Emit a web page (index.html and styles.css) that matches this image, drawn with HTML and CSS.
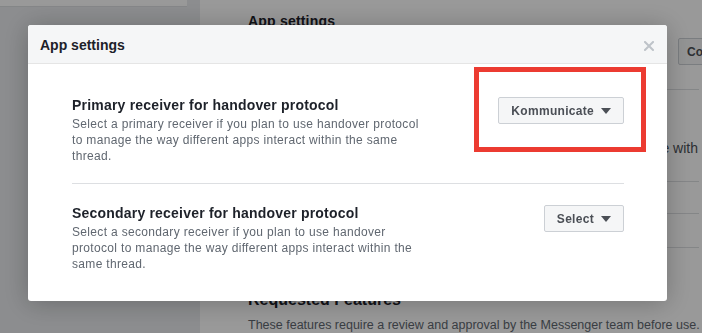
FILE: index.html
```html
<!DOCTYPE html>
<html lang="en">
<head>
  <meta charset="UTF-8">
  <title>App settings</title>
  <link rel="stylesheet" href="styles.css">
</head>
<body>

<div class="page">
  <aside class="sidebar">
    <div class="sidebar-card"></div>
  </aside>

  <main class="main">
    <h1 class="main-title">App settings</h1>
    <div class="main-actions">
      <button type="button" class="page-btn">Configure</button>
    </div>
    <div class="main-row row-a"></div>
    <div class="main-row row-note">Choose which apps your Page can share with</div>
    <div class="main-row row-b"></div>
    <div class="main-row row-c"></div>

    <h2 class="main-subtitle">Requested Features</h2>
    <p class="main-text">These features require a review and approval by the Messenger team before use.</p>
  </main>
</div>

<div class="overlay">
  <div class="modal">
    <div class="modal-header">
      <span class="modal-title">App settings</span>
      <span class="modal-close" title="Close">
        <svg width="10" height="10" viewBox="0 0 10 10">
          <path d="M1 1 L9 9 M9 1 L1 9" stroke="#bec3c9" stroke-width="2" stroke-linecap="square"/>
        </svg>
      </span>
    </div>

    <div class="modal-body">
      <div class="setting">
        <div class="setting-text">
          <div class="setting-title">Primary receiver for handover protocol</div>
          <div class="setting-desc">Select a primary receiver if you plan to use handover protocol to manage the way different apps interact within the same thread.</div>
        </div>
        <button type="button" class="select-btn">
          Kommunicate
          <svg class="caret" width="10" height="6" viewBox="0 0 10 6"><path d="M0 0 H10 L5 6 Z" fill="#4b4f56"/></svg>
        </button>
      </div>

      <div class="setting">
        <div class="setting-text">
          <div class="setting-title">Secondary receiver for handover protocol</div>
          <div class="setting-desc">Select a secondary receiver if you plan to use handover protocol to manage the way different apps interact within the same thread.</div>
        </div>
        <button type="button" class="select-btn">
          Select
          <svg class="caret" width="10" height="6" viewBox="0 0 10 6"><path d="M0 0 H10 L5 6 Z" fill="#4b4f56"/></svg>
        </button>
      </div>
    </div>
  </div>

  <!-- красная рамка-выделение поверх окна -->
  <div class="callout"></div>
</div>

</body>
</html>
```

FILE: styles.css
```css
html, body {
  margin: 0;
  height: 100%;
  overflow: hidden;
}
body {
  font-family: "Liberation Sans", Arial, sans-serif;
  color: #1d2129;
  background: #fff;
}

/* страница под затемнением */
.page {
  display: flex;
  width: 702px;
  height: 100%;
}
.sidebar {
  flex: 0 0 200px;
  background: #e9ebee;
}
.sidebar-card {
  width: 187px;
  height: 6px;
  background: #fff;
  border-bottom: 1px solid #dddfe2;
}
.main {
  flex: 0 0 auto;
  width: 451px;
  padding: 0 3px 0 48px;
  background: #fff;
}
.main-title {
  margin: 12px 0 0;
  font-size: 14px;
  line-height: 18px;
  letter-spacing: 0.2px;
}
.main-actions {
  margin-top: 8px;
  padding-left: 430px;
  white-space: nowrap;
  height: 27px;
}
.page-btn {
  height: 27px;
  padding: 0 8px;
  border: 1px solid #ccd0d5;
  border-radius: 2px;
  background: #f5f6f7;
  font: bold 12px "Liberation Sans", Arial, sans-serif;
  color: #4b4f56;
}
.main-row {
  border-bottom: 1px solid #dddfe2;
}
.row-a { height: 24px; }
.row-b { height: 31px; }
.row-c { height: 33px; }
.row-note {
  height: 41px;
  padding: 50px 1px 0 0;
  line-height: 16px;
  text-align: right;
  white-space: nowrap;
  overflow: hidden;
  font-size: 14px;
  color: #4b4f56;
}
.main-subtitle {
  margin: 42px 0 0;
  font-size: 16px;
  line-height: 20px;
}
.main-text {
  margin: 8px 0 0;
  font-size: 12.5px;
  line-height: 15px;
  color: #606770;
  white-space: nowrap;
}

/* затемнение и модальное окно */
.overlay {
  position: fixed;
  inset: 0;
  background: rgba(0, 0, 0, 0.4);
  padding: 25px 0 0 28px;
}
.modal {
  width: 639px;
  background: #fff;
  border-radius: 3px;
  overflow: hidden;
  box-shadow: 0 2px 26px rgba(0, 0, 0, 0.25);
}
.modal-header {
  display: flex;
  align-items: center;
  justify-content: space-between;
  height: 38px;
  padding: 0 13px 0 12px;
  background: #f5f6f7;
  border-bottom: 1px solid #e5e5e5;
}
.modal-title {
  margin-top: 2px;
  font-size: 14px;
  font-weight: bold;
  color: #1d2129;
}
.modal-close {
  display: flex;
  margin-top: 3px;
}
.modal-body {
  padding: 13px 43px 10px 44px;
}
.setting {
  display: flex;
  justify-content: space-between;
  align-items: flex-start;
  padding: 19px 0;
}
.setting + .setting {
  padding-top: 20px;
  border-top: 1px solid #dddfe2;
}
.setting-text {
  max-width: 352px;
}
.setting-title {
  font-size: 14px;
  font-weight: bold;
  line-height: 18px;
  letter-spacing: 0.2px;
}
.setting-desc {
  margin-top: 2px;
  font-size: 12px;
  line-height: 16px;
  letter-spacing: 0.33px;
  color: #606770;
}
.select-btn {
  display: flex;
  align-items: center;
  height: 27px;
  margin-top: 1px;
  padding: 0 12px;
  border: 1px solid #ccd0d5;
  border-radius: 2px;
  background: #f5f6f7;
  font: bold 12px "Liberation Sans", Arial, sans-serif;
  letter-spacing: 0.3px;
  color: #4b4f56;
}
.caret {
  margin-left: 7px;
}

.callout {
  position: absolute;
  left: 474px;
  top: 67px;
  width: 162px;
  height: 75px;
  border: 5px solid #ec3b31;
}
```
